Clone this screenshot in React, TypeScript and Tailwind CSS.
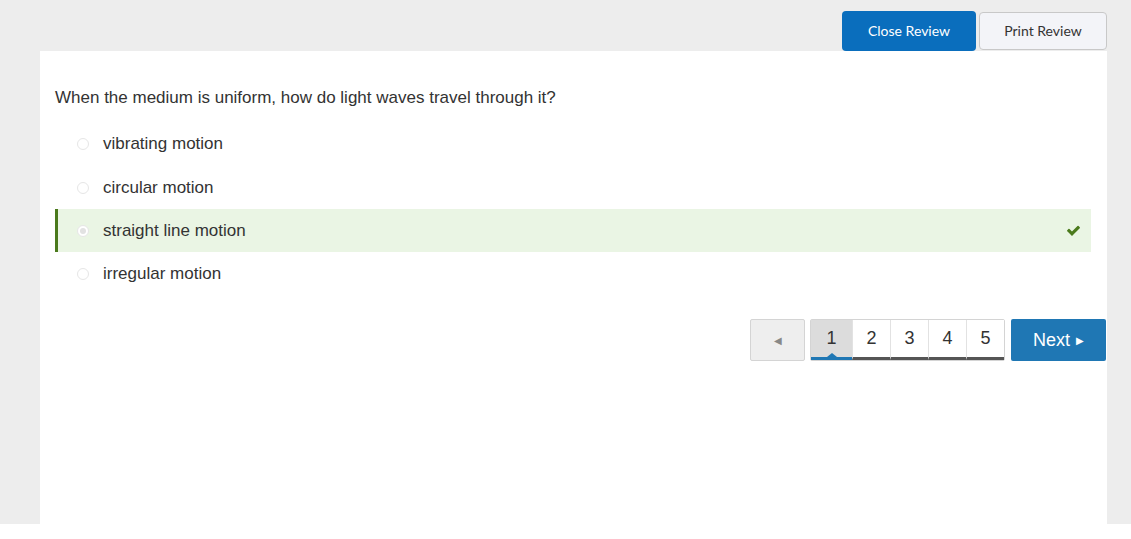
import React, { useState } from 'react';

const options = ['vibrating motion', 'circular motion', 'straight line motion', 'irregular motion'];
const correctIndex = 2;

const CheckIcon: React.FC = () => (
  <svg viewBox="0 0 1792 1792" className="w-[15px] h-[15px]" fill="#4b7a1c">
    <path d="M1671 566q0 40-28 68l-724 724-136 136q-28 28-68 28t-68-28l-136-136-362-362q-28-28-28-68t28-68l136-136q28-28 68-28t68 28l294 295 656-657q28-28 68-28t68 28l136 136q28 28 28 68z" />
  </svg>
);

const App: React.FC = () => {
  const [page, setPage] = useState(1);

  return (
    <div className="w-[1131px] h-[539px] bg-white" style={{ fontFamily: '"Liberation Sans", Arial, sans-serif' }}>
      <div className="h-[524px] bg-[#ededed] pl-[40px] pr-[24px] pt-[11px] flex flex-col">
        <div className="flex justify-end items-center gap-[3px] h-[40px]" style={{ fontFamily: 'Lato, sans-serif' }}>
          <button className="h-[40px] w-[134px] rounded-[4px] bg-[#0a6ebd] text-white text-[14px] pb-[2px]">Close Review</button>
          <button className="h-[38px] w-[128px] rounded-[4px] bg-[#f3f4f8] border border-[#c8c8c8] text-[#333] text-[14px] pb-[2px]">
            Print Review
          </button>
        </div>

        <div className="flex-1 bg-white pl-[15px] pt-[36px]">
          <p className="text-[17px] leading-[22px] text-[#333]">
            When the medium is uniform, how do light waves travel through it?
          </p>

          <div className="mt-[13px] mr-[16px] flex flex-col">
            {options.map((opt, i) => {
              const correct = i === correctIndex;
              const h = i === 0 ? 'h-[44px]' : 'h-[43px]';
              return (
                <div
                  key={opt}
                  className={
                    correct
                      ? `${h} flex items-center bg-[#eaf5e4] border-l-[3px] border-[#4b7a1c] pl-[19px] pr-[10px]`
                      : `${h} flex items-center pl-[22px] pr-[10px]`
                  }
                >
                  <span className="w-[12px] h-[12px] rounded-full border border-[#e6e6e6] bg-white flex items-center justify-center">
                    {correct && <span className="w-[6px] h-[6px] rounded-full bg-[#e2e2e2]" />}
                  </span>
                  <span className="ml-[14px] text-[17px] text-[#333]">{opt}</span>
                  {correct && (
                    <span className="ml-auto">
                      <CheckIcon />
                    </span>
                  )}
                </div>
              );
            })}
          </div>

          <div className="mt-[24px] mr-[1px] flex justify-end items-center">
            <button className="h-[42px] w-[55px] bg-[#eeeeee] border border-[#d4d4d4] rounded-[2px] flex items-center justify-center text-[#888] text-[10px]">
              ◀
            </button>
            <div className="ml-[5px] h-[42px] flex border border-[#d4d4d4] rounded-[2px] relative">
              {[1, 2, 3, 4, 5].map(n => (
                <button
                  key={n}
                  onClick={() => setPage(n)}
                  className={
                    n === page
                      ? 'relative h-full w-[41px] bg-[#dcdcdc] text-[18px] text-[#333] border-b-[3px] border-[#1f77b4]'
                      : 'h-full w-[38px] bg-white text-[18px] text-[#333] border-l border-[#e2e2e2] border-b-[3px] border-b-[#555]'
                  }
                >
                  {n}
                  {n === page && (
                    <span className="absolute left-1/2 -translate-x-1/2 bottom-0 w-0 h-0 border-l-[5px] border-r-[5px] border-b-[4px] border-l-transparent border-r-transparent border-b-[#1f77b4]" />
                  )}
                </button>
              ))}
            </div>
            <button className="ml-[6px] h-[42px] w-[95px] bg-[#1f77b4] rounded-[2px] text-white text-[18px] flex items-center justify-center gap-[6px]">
              Next <span className="text-[10px]">▶</span>
            </button>
          </div>
        </div>
      </div>
    </div>
  );
};

export default App;
